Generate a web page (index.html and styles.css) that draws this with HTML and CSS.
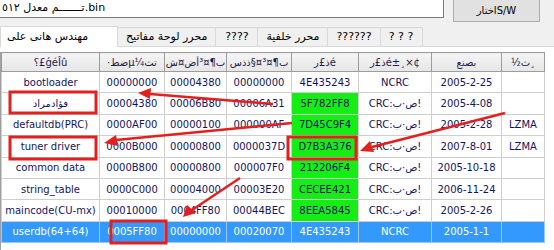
FILE: index.html
```html
<!DOCTYPE html>
<html lang="ar">
<head>
    <meta charset="UTF-8">
    <title>محرر السوفت وير</title>
    <link rel="stylesheet" href="styles.css">
</head>
<body>
    <!-- file picker -->
    <div class="top">
        <input class="path" type="text" value="تـــــــم معدل ٥١٢.bin" dir="ltr">
        <button class="pick">اختارS/W</button>
    </div>

    <!-- tabs -->
    <div class="tabs">
        <span class="tab active">مهندس هانى على</span>
        <span class="tab">محرر لوحة مفاتيح</span>
        <span class="tab">????</span>
        <span class="tab">محرر خلفية</span>
        <span class="tab">??????</span>
        <span class="tab">? ? ?</span>
    </div>

    <div class="panel">
        <div class="list">
            <table class="grid">
                <colgroup>
                    <col class="c1"><col class="c2"><col class="c3"><col class="c4">
                    <col class="c5"><col class="c6"><col class="c7"><col class="c8">
                </colgroup>
                <thead>
                    <tr>
                        <th class="raw">؟£ǵéÎû</th>
                        <th class="raw">·طضµ¼ثت</th>
                        <th class="raw">ش¤ضأ³¤¶ب</th>
                        <th class="raw">سذذ§¤³¤¶ب</th>
                        <th class="raw">ر£ذé</th>
                        <th class="raw">ر£ذé±¸×¢</th>
                        <th>بصنع</th>
                        <th class="raw">½ث¸</th>
                    </tr>
                </thead>
                <tbody>
                    <tr>
                        <td>bootloader</td><td>00000000</td><td>00004380</td><td>00000000</td>
                        <td>4E435243</td><td>NCRC</td><td>2005-2-25</td><td></td>
                    </tr>
                    <tr>
                        <td>فؤادمراد</td><td>00004380</td><td>00006B80</td><td>00006A31</td>
                        <td class="ok">5F782FF8</td><td>CRC:ص·ب!</td><td>2005-4-08</td><td></td>
                    </tr>
                    <tr>
                        <td>defaultdb(PRC)</td><td>0000AF00</td><td>00000100</td><td>000000AF</td>
                        <td class="ok">7D45C9F4</td><td>CRC:ص·ب!</td><td>2005-2-28</td><td>LZMA</td>
                    </tr>
                    <tr>
                        <td>tuner driver</td><td>0000B000</td><td>00000800</td><td>0000037D</td>
                        <td class="ok">D7B3A376</td><td>CRC:ص·ب!</td><td>2007-8-01</td><td>LZMA</td>
                    </tr>
                    <tr>
                        <td>common data</td><td>0000B800</td><td>00000800</td><td>000007F0</td>
                        <td class="ok">212206F4</td><td>CRC:ص·ب!</td><td>2005-10-18</td><td></td>
                    </tr>
                    <tr>
                        <td>string_table</td><td>0000C000</td><td>00004000</td><td>00003E20</td>
                        <td class="ok">CECEE421</td><td>CRC:ص·ب!</td><td>2006-11-24</td><td></td>
                    </tr>
                    <tr>
                        <td>maincode(CU-mx)</td><td>00010000</td><td>0004FF80</td><td>00044BEC</td>
                        <td class="ok">8EEA5845</td><td>CRC:ص·ب!</td><td>2005-2-26</td><td></td>
                    </tr>
                    <tr class="selected">
                        <td>userdb(64+64)</td><td>0005FF80</td><td>00000000</td><td>00020070</td>
                        <td>4E435243</td><td>NCRC</td><td>2005-1-1</td><td></td>
                    </tr>
                </tbody>
            </table>
        </div>
    </div>

    <!-- red markup drawn over the screenshot -->
    <svg class="marks" width="554" height="250" viewBox="0 0 554 250">
        <g fill="none" stroke="#e3201f" stroke-width="3">
            <rect x="10" y="92" width="86" height="21"/>
            <rect x="10" y="137" width="86" height="22"/>
            <rect x="288" y="137" width="68" height="22"/>
            <rect x="111" y="221" width="55" height="22"/>
        </g>
        <g stroke="#e3201f" stroke-width="2.5">
            <line x1="273" y1="104" x2="150" y2="94"/>
            <line x1="292" y1="123" x2="116" y2="140"/>
            <line x1="505" y1="113" x2="372" y2="147"/>
            <line x1="240" y1="178" x2="192" y2="210"/>
        </g>
        <g fill="#e3201f">
            <polygon points="138,93 151,88 150,99"/>
            <polygon points="104,143 116,135 118,146"/>
            <polygon points="360,151 370,141 374,152"/>
            <polygon points="183,217 187,205 196,213"/>
        </g>
    </svg>
</body>
</html>
```

FILE: styles.css
```css
body {
    margin: 0;
    background: #f0f0f0;
    font-family: "DejaVu Sans", sans-serif;
    font-size: 11px;
    color: #000;
    position: relative;
    width: 554px;
    height: 250px;
    overflow: hidden;
}

.top {
    display: flex;
    align-items: flex-start;
    margin-top: -4px;
    height: 30px;
}
.path {
    box-sizing: border-box;
    width: 446px;
    height: 22px;
    margin: 0 0 0 -2px;
    padding: 0 3px;
    border: 1px solid #7a7a7a;
    background: #fff;
    font-family: "DejaVu Sans", sans-serif;
    font-size: 11px;
    color: #000;
}
.pick {
    box-sizing: border-box;
    width: 87px;
    height: 26px;
    margin-left: 9px;
    border: 1px solid #adadad;
    background: #e1e1e1;
    font-family: "DejaVu Sans", sans-serif;
    font-size: 10px;
    color: #000;
    padding: 3px 0 0;
}

.tabs {
    display: flex;
    align-items: flex-end;
    height: 20px;
    border-bottom: 1px solid #d9d9d9;
}
.tab {
    box-sizing: border-box;
    min-width: 42px;
    height: 19px;
    padding: 0 8px;
    border: 1px solid #d9d9d9;
    border-bottom: none;
    border-left: none;
    background: #f0f0f0;
    line-height: 18px;
    text-align: center;
    white-space: nowrap;
}
.tab.active {
    height: 21px;
    margin-bottom: -1px;
    width: 118px;
    padding: 0 0 0 6px;
    border-left: 1px solid #d9d9d9;
    background: #fff;
    line-height: 20px;
    text-align: left;
}

.panel {
    background: #fff;
    padding-top: 5px;
    height: 210px;
}
.list {
    border-left: 1px solid #a0a0a0;
    height: 100%;
    background: #fff;
}

.grid {
    border-collapse: collapse;
    table-layout: fixed;
    width: 543px;
    font-size: 10px;
    color: #14145e;
}
.c1 { width: 98px; }
.c2 { width: 65px; }
.c3 { width: 62px; }
.c4 { width: 65px; }
.c5 { width: 67px; }
.c6 { width: 73px; }
.c7 { width: 70px; }
.c8 { width: 43px; }

.grid thead tr {
    height: 19px;
}
.grid tbody tr {
    height: 21.4px;
}
.grid th {
    padding: 0;
    background: linear-gradient(#f4f4f4, #e6e6e6);
    border: 1px solid #9c9c9c;
    font-weight: normal;
    color: #1c1c4c;
    white-space: nowrap;
    overflow: hidden;
}
/* garbled captions, kept in the order they show on screen */
.grid th.raw {
    direction: ltr;
    unicode-bidi: bidi-override;
}
.grid td {
    padding: 0;
    border: 1px solid #cfcfcf;
    text-align: center;
    white-space: nowrap;
    overflow: hidden;
}
.grid td.ok {
    background: #14ee14;
}
.grid tr.selected td {
    background: #3399ff;
    color: #fff;
    border-color: #9cc8f5;
}

.marks {
    position: absolute;
    left: 0;
    top: 0;
    pointer-events: none;
}
```
